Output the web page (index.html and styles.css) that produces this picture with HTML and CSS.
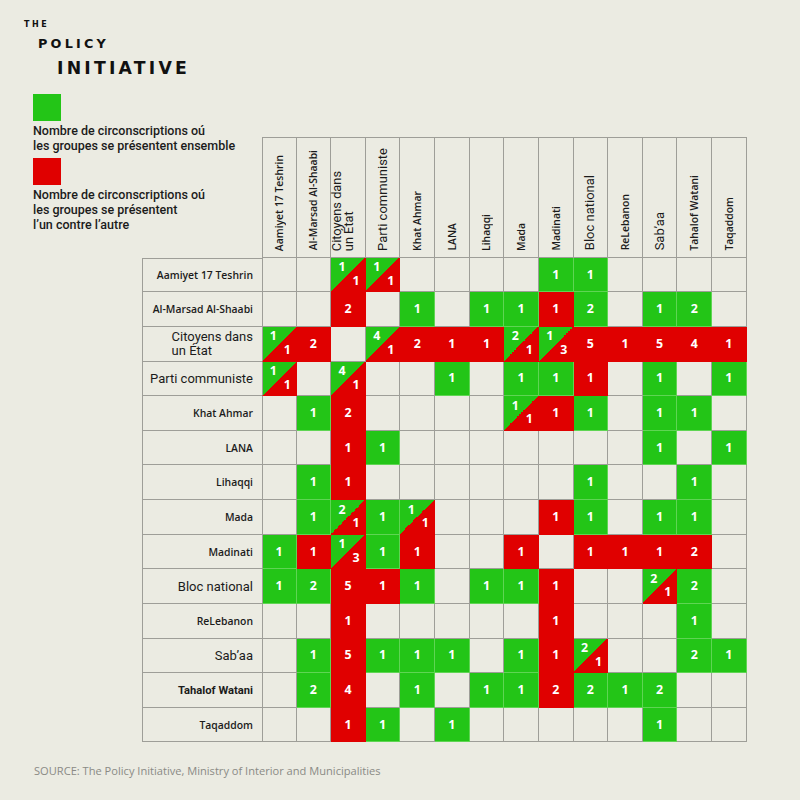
FILE: index.html
```html
<!DOCTYPE html>
<html lang="fr">
<head>
<meta charset="utf-8">
<title>The Policy Initiative</title>
<link rel="stylesheet" href="styles.css">
</head>
<body>
<main class="page">
  <header class="top">
    <div class="brand">
      <span class="brand-the">THE</span>
      <span class="brand-policy">POLICY</span>
      <span class="brand-initiative">INITIATIVE</span>
    </div>
    <div class="legend">
      <div class="legend-item">
        <span class="swatch swatch-green"></span>
        <p class="legend-text">Nombre de circonscriptions oú<br>les groupes se présentent ensemble</p>
      </div>
      <div class="legend-item">
        <span class="swatch swatch-red"></span>
        <p class="legend-text">Nombre de circonscriptions oú<br>les groupes se présentent<br>l’un contre l’autre</p>
      </div>
    </div>
  </header>

  <section class="chart">
    <div class="corner"></div>
    <div class="h first"><span class="ht">Aamiyet 17 Teshrin</span></div>
    <div class="h"><span class="ht">Al-Marsad Al-Shaabi</span></div>
    <div class="h h-left"><span class="ht ht-big ht-two">Citoyens dans<br>un État</span></div>
    <div class="h"><span class="ht ht-big">Parti communiste</span></div>
    <div class="h"><span class="ht">Khat Ahmar</span></div>
    <div class="h"><span class="ht">LANA</span></div>
    <div class="h"><span class="ht">Lihaqqi</span></div>
    <div class="h"><span class="ht">Mada</span></div>
    <div class="h"><span class="ht">Madinati</span></div>
    <div class="h"><span class="ht ht-big">Bloc national</span></div>
    <div class="h"><span class="ht">ReLebanon</span></div>
    <div class="h"><span class="ht ht-big">Sab’aa</span></div>
    <div class="h"><span class="ht">Tahalof Watani</span></div>
    <div class="h"><span class="ht">Taqaddom</span></div>

    <!-- Row: Aamiyet 17 Teshrin -->
    <div class="lbl lbl-first">Aamiyet 17 Teshrin</div>
    <div class="c first"></div>
    <div class="c"></div>
    <div class="c s"><b>1</b><b class="lo">1</b></div>
    <div class="c s"><b>1</b><b class="lo">1</b></div>
    <div class="c"></div>
    <div class="c"></div>
    <div class="c"></div>
    <div class="c"></div>
    <div class="c g">1</div>
    <div class="c g">1</div>
    <div class="c"></div>
    <div class="c"></div>
    <div class="c"></div>
    <div class="c"></div>

    <!-- Row: Al-Marsad Al-Shaabi -->
    <div class="lbl">Al-Marsad Al-Shaabi</div>
    <div class="c first"></div>
    <div class="c"></div>
    <div class="c r">2</div>
    <div class="c"></div>
    <div class="c g">1</div>
    <div class="c"></div>
    <div class="c g">1</div>
    <div class="c g">1</div>
    <div class="c r">1</div>
    <div class="c g">2</div>
    <div class="c"></div>
    <div class="c g">1</div>
    <div class="c g">2</div>
    <div class="c"></div>

    <!-- Row: Citoyens dans un État -->
    <div class="lbl lbl-big"><span class="lbl-two">Citoyens dans<br>un État</span></div>
    <div class="c first s"><b>1</b><b class="lo">1</b></div>
    <div class="c r">2</div>
    <div class="c"></div>
    <div class="c s"><b>4</b><b class="lo">1</b></div>
    <div class="c r">2</div>
    <div class="c r">1</div>
    <div class="c r">1</div>
    <div class="c s"><b>2</b><b class="lo">1</b></div>
    <div class="c s"><b>1</b><b class="lo">3</b></div>
    <div class="c r">5</div>
    <div class="c r">1</div>
    <div class="c r">5</div>
    <div class="c r">4</div>
    <div class="c r">1</div>

    <!-- Row: Parti communiste -->
    <div class="lbl lbl-big">Parti communiste</div>
    <div class="c first s"><b>1</b><b class="lo">1</b></div>
    <div class="c"></div>
    <div class="c s"><b>4</b><b class="lo">1</b></div>
    <div class="c"></div>
    <div class="c"></div>
    <div class="c g">1</div>
    <div class="c"></div>
    <div class="c g">1</div>
    <div class="c g">1</div>
    <div class="c r">1</div>
    <div class="c"></div>
    <div class="c g">1</div>
    <div class="c"></div>
    <div class="c g">1</div>

    <!-- Row: Khat Ahmar -->
    <div class="lbl">Khat Ahmar</div>
    <div class="c first"></div>
    <div class="c g">1</div>
    <div class="c r">2</div>
    <div class="c"></div>
    <div class="c"></div>
    <div class="c"></div>
    <div class="c"></div>
    <div class="c s"><b>1</b><b class="lo">1</b></div>
    <div class="c r">1</div>
    <div class="c g">1</div>
    <div class="c"></div>
    <div class="c g">1</div>
    <div class="c g">1</div>
    <div class="c"></div>

    <!-- Row: LANA -->
    <div class="lbl">LANA</div>
    <div class="c first"></div>
    <div class="c"></div>
    <div class="c r">1</div>
    <div class="c g">1</div>
    <div class="c"></div>
    <div class="c"></div>
    <div class="c"></div>
    <div class="c"></div>
    <div class="c"></div>
    <div class="c"></div>
    <div class="c"></div>
    <div class="c g">1</div>
    <div class="c"></div>
    <div class="c g">1</div>

    <!-- Row: Lihaqqi -->
    <div class="lbl">Lihaqqi</div>
    <div class="c first"></div>
    <div class="c g">1</div>
    <div class="c r">1</div>
    <div class="c"></div>
    <div class="c"></div>
    <div class="c"></div>
    <div class="c"></div>
    <div class="c"></div>
    <div class="c"></div>
    <div class="c g">1</div>
    <div class="c"></div>
    <div class="c"></div>
    <div class="c g">1</div>
    <div class="c"></div>

    <!-- Row: Mada -->
    <div class="lbl">Mada</div>
    <div class="c first"></div>
    <div class="c g">1</div>
    <div class="c s"><b>2</b><b class="lo">1</b></div>
    <div class="c g">1</div>
    <div class="c s"><b>1</b><b class="lo">1</b></div>
    <div class="c"></div>
    <div class="c"></div>
    <div class="c"></div>
    <div class="c r">1</div>
    <div class="c g">1</div>
    <div class="c"></div>
    <div class="c g">1</div>
    <div class="c g">1</div>
    <div class="c"></div>

    <!-- Row: Madinati -->
    <div class="lbl">Madinati</div>
    <div class="c first g">1</div>
    <div class="c r">1</div>
    <div class="c s"><b>1</b><b class="lo">3</b></div>
    <div class="c g">1</div>
    <div class="c r">1</div>
    <div class="c"></div>
    <div class="c"></div>
    <div class="c r">1</div>
    <div class="c"></div>
    <div class="c r">1</div>
    <div class="c r">1</div>
    <div class="c r">1</div>
    <div class="c r">2</div>
    <div class="c"></div>

    <!-- Row: Bloc national -->
    <div class="lbl lbl-big">Bloc national</div>
    <div class="c first g">1</div>
    <div class="c g">2</div>
    <div class="c r">5</div>
    <div class="c r">1</div>
    <div class="c g">1</div>
    <div class="c"></div>
    <div class="c g">1</div>
    <div class="c g">1</div>
    <div class="c r">1</div>
    <div class="c"></div>
    <div class="c"></div>
    <div class="c s"><b>2</b><b class="lo">1</b></div>
    <div class="c g">2</div>
    <div class="c"></div>

    <!-- Row: ReLebanon -->
    <div class="lbl">ReLebanon</div>
    <div class="c first"></div>
    <div class="c"></div>
    <div class="c r">1</div>
    <div class="c"></div>
    <div class="c"></div>
    <div class="c"></div>
    <div class="c"></div>
    <div class="c"></div>
    <div class="c r">1</div>
    <div class="c"></div>
    <div class="c"></div>
    <div class="c"></div>
    <div class="c g">1</div>
    <div class="c"></div>

    <!-- Row: Sab'aa -->
    <div class="lbl lbl-big">Sab’aa</div>
    <div class="c first"></div>
    <div class="c g">1</div>
    <div class="c r">5</div>
    <div class="c g">1</div>
    <div class="c g">1</div>
    <div class="c g">1</div>
    <div class="c"></div>
    <div class="c g">1</div>
    <div class="c r">1</div>
    <div class="c s"><b>2</b><b class="lo">1</b></div>
    <div class="c"></div>
    <div class="c"></div>
    <div class="c g">2</div>
    <div class="c g">1</div>

    <!-- Row: Tahalof Watani -->
    <div class="lbl lbl-tahalof">Tahalof Watani</div>
    <div class="c first"></div>
    <div class="c g">2</div>
    <div class="c r">4</div>
    <div class="c"></div>
    <div class="c g">1</div>
    <div class="c"></div>
    <div class="c g">1</div>
    <div class="c g">1</div>
    <div class="c r">2</div>
    <div class="c g">2</div>
    <div class="c g">1</div>
    <div class="c g">2</div>
    <div class="c"></div>
    <div class="c"></div>

    <!-- Row: Taqaddom -->
    <div class="lbl">Taqaddom</div>
    <div class="c first"></div>
    <div class="c"></div>
    <div class="c r">1</div>
    <div class="c g">1</div>
    <div class="c"></div>
    <div class="c g">1</div>
    <div class="c"></div>
    <div class="c"></div>
    <div class="c"></div>
    <div class="c"></div>
    <div class="c"></div>
    <div class="c g">1</div>
    <div class="c"></div>
    <div class="c"></div>
  </section>

  <p class="source">SOURCE: The Policy Initiative, Ministry of Interior and Municipalities</p>
</main>
</body>
</html>
```

FILE: styles.css
```css
* {
  box-sizing: border-box;
}

html,
body {
  margin: 0;
  padding: 0;
}

body {
  width: 800px;
  height: 800px;
  overflow: hidden;
  background: #ebebe2;
  font-family: "Open Sans", "Liberation Sans", sans-serif;
  color: #1b1b1b;
}

.page {
  display: grid;
  grid-template-columns: 800px;
  grid-template-rows: auto auto;
}

/* ---------- brand + legend ---------- */
.top {
  grid-area: 1 / 1;
  align-self: start;
}

.brand {
  display: flex;
  flex-direction: column;
  gap: 6px;
  padding-top: 19.5px;
  font-family: "DejaVu Sans", "Liberation Sans", sans-serif;
  font-weight: 700;
  color: #111;
}

.brand-the {
  font-size: 8px;
  line-height: 10px;
  letter-spacing: 2.6px;
  padding-left: 24px;
}

.brand-policy {
  font-size: 12.8px;
  line-height: 16px;
  letter-spacing: 3.2px;
  padding-left: 38px;
}

.brand-initiative {
  font-size: 17.3px;
  line-height: 20px;
  letter-spacing: 3.2px;
  padding-left: 57px;
}

.legend {
  display: flex;
  flex-direction: column;
  gap: 5px;
  margin-top: 16px;
  padding-left: 33px;
}

.legend-item {
  display: flex;
  flex-direction: column;
  align-items: flex-start;
  gap: 2px;
}

.swatch {
  display: block;
  width: 28px;
  height: 27px;
}

.swatch-green {
  background: #23c517;
}

.swatch-red {
  background: #e00000;
}

.legend-text {
  margin: 0;
  font-family: Roboto, "Liberation Sans", sans-serif;
  font-weight: 500;
  font-size: 12.5px;
  line-height: 15px;
  color: #1b1b1b;
}

/* ---------- chart ---------- */
.chart {
  grid-area: 1 / 1;
  align-self: start;
  justify-self: start;
  margin: 136.7px 0 0 141.5px;
  display: grid;
  grid-template-columns: 120px 35px repeat(13, 34.64px);
  grid-template-rows: 121px repeat(14, 34.64px);
}

.corner {
  border: 0;
}

.h {
  border-top: 1px solid #9e9e98;
  border-right: 1px solid #9e9e98;
  border-bottom: 1px solid #9e9e98;
  display: flex;
  align-items: flex-end;
  justify-content: center;
  padding-bottom: 6px;
}

.h.first {
  border-left: 1px solid #9e9e98;
}

.h-left {
  justify-content: flex-start;
  padding-left: 0;
}

.ht {
  writing-mode: vertical-rl;
  transform: rotate(180deg);
  font-family: "Open Sans", "Liberation Sans", sans-serif;
  font-weight: 600;
  font-size: 10.4px;
  line-height: 12px;
  color: #1b1b1b;
  white-space: nowrap;
}

.ht-big {
  font-family: Roboto, "Liberation Sans", sans-serif;
  font-weight: 400;
  font-size: 13px;
  line-height: 14px;
}

.ht-two {
  font-size: 12.8px;
  line-height: 12px;
}

.lbl {
  border-left: 1px solid #9e9e98;
  border-bottom: 1px solid #9e9e98;
  display: flex;
  align-items: center;
  justify-content: flex-end;
  padding-right: 8.5px;
  font-family: "Open Sans", "Liberation Sans", sans-serif;
  font-weight: 600;
  font-size: 10.4px;
  color: #1b1b1b;
  white-space: nowrap;
}

.lbl-first {
  border-top: 1px solid #9e9e98;
}

.lbl-big {
  font-family: Roboto, "Liberation Sans", sans-serif;
  font-weight: 400;
  font-size: 13px;
}

.lbl-tahalof {
  font-family: Roboto, "Liberation Sans", sans-serif;
  font-weight: 700;
  font-size: 11.2px;
}

.lbl-two {
  text-align: left;
  line-height: 14px;
}

.c {
  border-right: 1px solid #9e9e98;
  border-bottom: 1px solid #9e9e98;
  display: flex;
  align-items: center;
  justify-content: center;
  font-family: "Open Sans", "Liberation Sans", sans-serif;
  font-weight: 700;
  font-size: 12.4px;
  line-height: 14px;
  color: #fff;
}

.c.first {
  border-left: 1px solid #9e9e98;
}

.g {
  background: #23c517;
  border-color: #5fd553;
}

.r {
  background: #e00000;
  border-color: #e00000;
}

.s {
  display: grid;
  grid-template-columns: 14px 14px;
  grid-template-rows: 13.5px 13.5px;
  padding: 2.7px 1.6px 3.8px 4px;
  background: linear-gradient(to bottom right, #23c517 50%, #e00000 50%);
  border-color: #e00000;
}

.s b {
  font-weight: 700;
  display: flex;
  align-items: center;
  justify-content: center;
}

.s .lo {
  grid-column: 2;
  grid-row: 2;
}

/* ---------- source ---------- */
.source {
  grid-area: 2 / 1;
  margin: 22px 0 0 34px;
  font-family: "Open Sans", "Liberation Sans", sans-serif;
  font-weight: 400;
  font-size: 11.1px;
  line-height: 14px;
  color: #8a8a85;
}
```
